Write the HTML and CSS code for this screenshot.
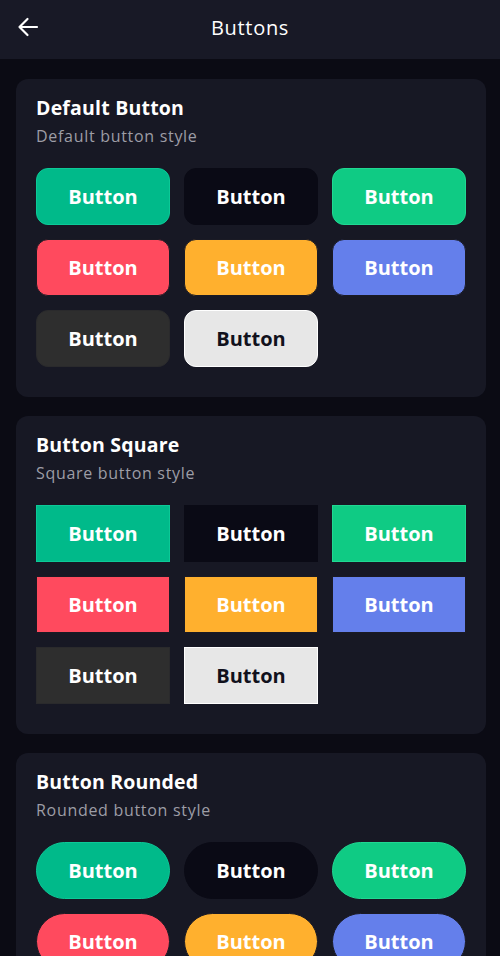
FILE: index.html
```html
<!DOCTYPE html>
<html>
<head>
<meta charset="utf-8">
<link rel="stylesheet" href="styles.css">
</head>
<body>
<header class="topbar">
  <svg class="back" width="22" height="22" viewBox="0 0 22 22" fill="none" stroke="#fff" stroke-width="2.2" stroke-linecap="round" stroke-linejoin="round"><path d="M20 11H2.5M10.5 3L2.5 11L10.5 19"/></svg>
  <h1 class="topbar-title">Buttons</h1>
</header>
<main class="content">
  <section class="card">
    <h2 class="card-title">Default Button</h2>
    <p class="card-sub">Default button style</p>
    <div class="btn-grid">
      <div class="btn c-teal">Button</div>
      <div class="btn c-black">Button</div>
      <div class="btn c-green">Button</div>
      <div class="btn c-red">Button</div>
      <div class="btn c-orange">Button</div>
      <div class="btn c-blue">Button</div>
      <div class="btn c-dark">Button</div>
      <div class="btn c-light">Button</div>
    </div>
  </section>
  <section class="card">
    <h2 class="card-title">Button Square</h2>
    <p class="card-sub">Square button style</p>
    <div class="btn-grid square">
      <div class="btn c-teal">Button</div>
      <div class="btn c-black">Button</div>
      <div class="btn c-green">Button</div>
      <div class="btn c-red">Button</div>
      <div class="btn c-orange">Button</div>
      <div class="btn c-blue">Button</div>
      <div class="btn c-dark">Button</div>
      <div class="btn c-light">Button</div>
    </div>
  </section>
  <section class="card">
    <h2 class="card-title">Button Rounded</h2>
    <p class="card-sub">Rounded button style</p>
    <div class="btn-grid rounded">
      <div class="btn c-teal">Button</div>
      <div class="btn c-black">Button</div>
      <div class="btn c-green">Button</div>
      <div class="btn c-red">Button</div>
      <div class="btn c-orange">Button</div>
      <div class="btn c-blue">Button</div>
      <div class="btn c-dark">Button</div>
      <div class="btn c-light">Button</div>
    </div>
  </section>
</main>
</body>
</html>
```
FILE: styles.css
```css
html, body {
  margin: 0;
  padding: 0;
  background: #0b0b14;
  font-family: "Open Sans", "Noto Sans", sans-serif;
  color: #fff;
  overflow: hidden;
  height: 956px;
}
.topbar {
  height: 59px;
  background: #181926;
  display: flex;
  align-items: center;
  justify-content: center;
  position: relative;
}
.back {
  position: absolute;
  left: 17px;
  top: 16px;
}
.topbar-title {
  margin: 0 0 4px;
  font-size: 20px;
  font-weight: 500;
  letter-spacing: 0.7px;
}
.content {
  padding: 20px 14px 20px 16px;
  display: flex;
  flex-direction: column;
  gap: 19px;
}
.card {
  background: #171824;
  border-radius: 12px;
  padding: 16px 20px 30px;
}
.card-title {
  margin: 0;
  font-size: 19.5px;
  line-height: 26px;
  font-weight: 700;
  letter-spacing: 0.2px;
}
.card-sub {
  margin: 4px 0 0;
  font-size: 16px;
  line-height: 22px;
  color: #9d9da6;
  letter-spacing: 0.7px;
}
.btn-grid {
  margin-top: 21px;
  display: grid;
  grid-template-columns: repeat(3, 1fr);
  gap: 14px;
}
.btn {
  height: 57px;
  box-sizing: border-box;
  border-radius: 12px;
  display: flex;
  align-items: center;
  justify-content: center;
  font-size: 20px;
  font-weight: 700;
  color: #fff;
  border: 1px solid rgba(0,0,0,0.35);
}
.square .btn { border-radius: 0; }
.rounded .btn { border-radius: 29px; }
.c-teal { background: #00ba8a; border-color: #0cc997; }
.c-black { background: #0a0a15; border-color: #0a0a15; }
.c-green { background: #0fcb84; border-color: #20d892; }
.c-red { background: #ff4a5e; border-color: #1a1a24; }
.c-orange { background: #ffb02e; border-color: #1a1a24; }
.c-blue { background: #647feb; border-color: #1a1a24; }
.c-dark { background: #2e2e2e; border-color: #2a2a2c; }
.c-light { background: #e7e7e7; color: #11111c; border-color: #fff; }
```
